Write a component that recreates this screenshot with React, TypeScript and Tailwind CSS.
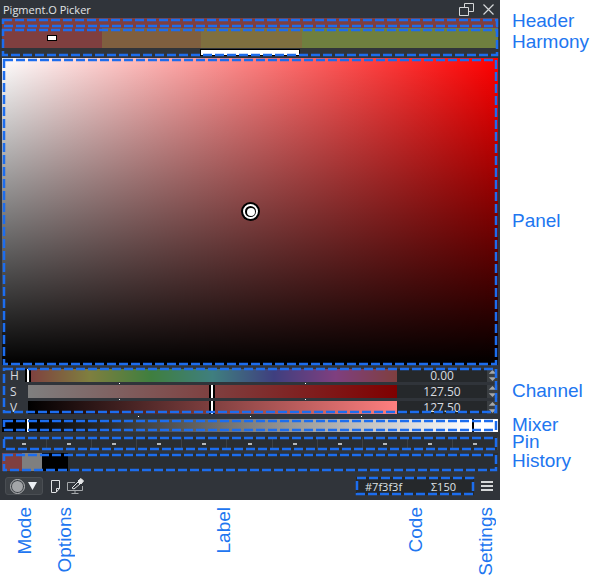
const pins = [0, 1, 2, 3, 4, 5, 6, 7, 8, 9, 10]

function Dash({ className }: { className: string }) {
  return (
    <svg className={`pointer-events-none absolute overflow-visible ${className}`}>
      <rect width="100%" height="100%" fill="none" stroke="#1c6dee" strokeWidth="2.5" strokeDasharray="9 3" />
    </svg>
  )
}

function Spin() {
  return (
    <svg className="h-full w-full" viewBox="0 0 10 14" fill="#a5a8ab">
      <path d="M5 1 L9 5 H1 Z" />
      <path d="M1 9 H9 L5 13 Z" />
    </svg>
  )
}

function Tick({ className }: { className: string }) {
  return <div className={`absolute h-px w-px bg-white ${className}`} />
}

function Channel({ label, value, bar, handle, rowClass }: { label: string; value: string; bar: string; handle: string; rowClass: string }) {
  return (
    <div className={`flex ${rowClass}`}>
      <div className="w-[26px] pl-[8px] text-[12px] leading-[14px] text-[#d8dce0]">{label}</div>
      <div className={`relative w-[369px] ${bar}`}>
        <div className={`absolute inset-y-0 w-[6px] border-x-2 border-black bg-white ${handle}`} />
      </div>
      <div className="w-[90px] bg-[#25282b] text-center text-[12px] leading-[14px] text-[#d8dce0]">{value}</div>
      <div className="w-[11px] bg-[#3a3e42]">
        <Spin />
      </div>
    </div>
  )
}

function Window() {
  return (
    <div className="relative flex h-[500px] w-[500px] flex-col bg-[#30343a] font-['Open_Sans',sans-serif]">
      {/* title bar */}
      <div className="flex h-[18px] items-center justify-between pl-[3px] pr-[6px]">
        <span className="text-[11px] leading-none text-[#e2e4e6]">Pigment.O Picker</span>
        <div className="flex items-center gap-[9px]">
          <svg width="15" height="14" viewBox="0 0 15 14" fill="none" stroke="#d5d7d9" strokeWidth="1">
            <path d="M0.5 5.5 H9.5 V13.5 H0.5 Z" />
            <path d="M5.5 5.5 V1.5 H14.5 V9.5 H9.5" />
          </svg>
          <svg width="11" height="11" viewBox="0 0 11 11" fill="none" stroke="#d5d7d9" strokeWidth="1.2">
            <path d="M0.5 0.5 L10.5 10.5 M10.5 0.5 L0.5 10.5" />
          </svg>
        </div>
      </div>

      {/* header */}
      <div className="relative mx-[2px] h-[10px] bg-[#7f3f3f]">
        <Dash className="left-[1px] top-[2px] h-[6px] w-[494px]" />
      </div>

      {/* harmony */}
      <div className="relative mx-[2px] h-[30px]">
        <div className="flex h-[20px]">
          <div className="relative w-[100px] bg-[#7f3f3f]">
            <div className="absolute left-[45px] top-[7px] h-[6px] w-[10px] border border-black bg-white" />
          </div>
          <div className="w-[99px] bg-[#7f5f3f]" />
          <div className="w-[101px] bg-[#7f6f3f]" />
          <div className="flex-1 bg-[#6f7f3f]" />
        </div>
        <div className="ml-[198px] mt-px h-[7px] w-[100px] border border-black bg-white" />
        <Dash className="left-[1px] top-[2px] h-[25px] w-[494px]" />
      </div>

      {/* panel */}
      <div className="relative mx-[2px] h-[307px] bg-[linear-gradient(to_bottom,transparent,#000),linear-gradient(to_right,#fff,#f00)]">
        <div className="absolute left-[239px] top-[144px] flex h-[19px] w-[19px] items-center justify-center rounded-full bg-black">
          <div className="flex h-[15px] w-[15px] items-center justify-center rounded-full bg-white">
            <div className="flex h-[11px] w-[11px] items-center justify-center rounded-full bg-black">
              <div className="h-[8px] w-[8px] rounded-full bg-white" />
            </div>
          </div>
        </div>
        <Dash className="left-[2px] top-[2px] h-[304px] w-[492px]" />
      </div>

      {/* channels */}
      <div className="relative mx-[2px] mt-[4px] flex h-[45px] flex-col">
        <Channel label="H" value="0.00" rowClass="h-[13px]" handle="-left-[3px]" bar="bg-[linear-gradient(to_right,#7f3f3f,#7f7f3f,#3f7f3f,#3f7f7f,#3f3f7f,#7f3f7f,#7f3f3f)]" />
        <div className="h-[3px]" />
        <Channel label="S" value="127.50" rowClass="h-[13px]" handle="left-[181px]" bar="bg-[linear-gradient(to_right,#7f7f7f,#7f0000)]" />
        <div className="h-[3px]" />
        <Channel label="V" value="127.50" rowClass="h-[13px]" handle="left-[181px]" bar="bg-[linear-gradient(to_right,#000,#ff7f7f)]" />
        <Tick className="left-[86px] top-[-1px]" />
        <Tick className="left-[148px] top-[-1px]" />
        <Tick className="left-[210px] top-[-1px]" />
        <Tick className="left-[272px] top-[-1px]" />
        <Tick className="left-[334px] top-[-1px]" />
        <Tick className="left-[117px] top-[14px]" />
        <Tick className="left-[303px] top-[14px]" />
        <Tick className="left-[117px] top-[30px]" />
        <Tick className="left-[303px] top-[30px]" />
        <Dash className="left-[2px] top-[0px] h-[43px] w-[492px]" />
      </div>

      {/* mixer */}
      <div className="relative mx-[2px] mt-[5px] flex h-[13px]">
        <div className="w-[25px] bg-black" />
        <div className="w-[2px] bg-white" />
        <div className="flex-1 bg-[linear-gradient(to_right,#000,#fff)]" />
        <div className="w-[2px] bg-black" />
        <div className="w-[24px] bg-white" />
        <Tick className="left-[136px] top-[-3px]" />
        <Tick className="left-[248px] top-[-3px]" />
        <Tick className="left-[359px] top-[-3px]" />
        <Dash className="left-[2px] top-[2px] h-[9px] w-[492px]" />
      </div>

      {/* pin */}
      <div className="relative mx-[2px] mt-[5px] flex h-[13px] bg-[#2a2e32]">
        {pins.map((pin) => (
          <div key={pin} className="flex w-[45.1px] items-center justify-center border-r border-[#3c4045] last:border-r-0">
            <div className="h-[2px] w-[4px] bg-[#b5b8bb]" />
          </div>
        ))}
        <Dash className="left-[2px] top-[1px] h-[11px] w-[492px]" />
      </div>

      {/* history */}
      <div className="relative mx-[2px] mt-[3px] flex h-[18px] bg-[#2a2e32]">
        <div className="w-[20px] bg-[#7f3f3f]" />
        <div className="w-[20px] bg-[#7f7f7f]" />
        <div className="w-[26px] bg-black" />
        <Dash className="left-[2px] top-[2px] h-[15px] w-[492px]" />
      </div>

      {/* footer */}
      <div className="flex flex-1 items-center pl-[5px] pr-[7px] pt-px">
        <div className="flex h-[18px] w-[38px] items-center gap-[3px] rounded-[3px] border border-[#4a4e53] bg-[#3d4146] pl-[4px]">
          <div className="flex h-[15px] w-[15px] items-center justify-center rounded-full border border-[#b5b7b9]">
            <div className="h-[11px] w-[11px] rounded-full bg-[#a3a5a8]" />
          </div>
          <svg width="9" height="8" viewBox="0 0 9 8" fill="#ecf0f4">
            <path d="M0 0 H9 L4.5 8 Z" />
          </svg>
        </div>
        <svg className="ml-[7px]" width="11" height="13" viewBox="0 0 11 13" fill="none" stroke="#e0e2e4">
          <path d="M1.5 0.5 H9.5 V8.5 L6 12.5 H1.5 Z" />
          <path d="M9.5 8.5 H6.5 V12" />
        </svg>
        <svg className="ml-[6px]" width="17" height="16" viewBox="0 0 17 16" fill="none" stroke="#a5a8ab">
          <path d="M8 4.5 H0.5 V12.5 H15.5 V8" />
          <path d="M8 12.5 V15 M4.5 15.5 H11.5" />
          <path d="M5 10 L11 4 L13 6 L7 11 Z" stroke="#e4e6e8" />
          <path d="M11 3 L14 0.5 L16.5 3 L14 6 Z" fill="#e4e6e8" stroke="#e4e6e8" />
        </svg>
        <div className="relative ml-auto flex h-[18px] w-[118px] items-center justify-between bg-[#25282b] pl-[9px] pr-[18px] text-[11px] text-[#dfe2e5]">
          <span>#7f3f3f</span>
          <span>Σ150</span>
          <Dash className="left-[1px] top-px h-[16px] w-[116px]" />
        </div>
        <div className="ml-[7px] flex w-[12px] flex-col gap-[2px]">
          <div className="h-[2px] bg-[#d5d7d9]" />
          <div className="h-[2px] bg-[#d5d7d9]" />
          <div className="h-[2px] bg-[#d5d7d9]" />
        </div>
      </div>
    </div>
  )
}

export default function App() {
  return (
    <div className="h-[580px] w-[601px] overflow-hidden bg-white font-['Liberation_Sans',sans-serif] text-[19px] leading-[21px] text-[#2176f0]">
      <div className="flex">
        <Window />
        <div className="flex flex-col pl-[12px] pt-[10px]">
          <span>Header</span>
          <span>Harmony</span>
          <span className="mt-[158px]">Panel</span>
          <span className="mt-[149px]">Channel</span>
          <span className="mt-[15px] leading-[17px]">Mixer</span>
          <span className="leading-[17px]">Pin</span>
          <span>History</span>
        </div>
      </div>
      <div className="flex items-start pt-[7px]">
        <span className="ml-[14px] rotate-180 [writing-mode:vertical-rl]">Mode</span>
        <span className="ml-[19px] rotate-180 [writing-mode:vertical-rl]">Options</span>
        <span className="ml-[138px] rotate-180 [writing-mode:vertical-rl]">Label</span>
        <span className="ml-[171px] rotate-180 [writing-mode:vertical-rl]">Code</span>
        <span className="ml-[49px] rotate-180 [writing-mode:vertical-rl]">Settings</span>
      </div>
    </div>
  )
}
